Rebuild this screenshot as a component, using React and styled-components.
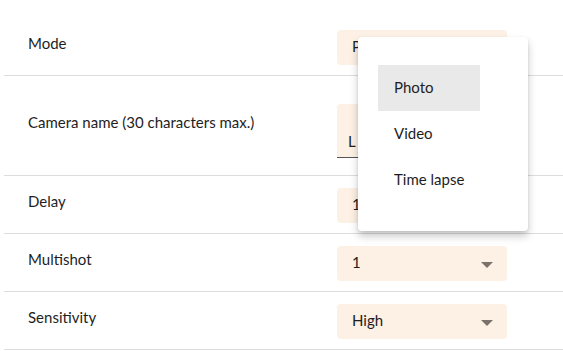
import React from "react";
import styled, { createGlobalStyle } from "styled-components";

const GlobalStyle = createGlobalStyle`
    body {
        margin: 0;
        background: #ffffff;
        font-family: Lato, "Open Sans", sans-serif;
        color: #1e1e1e;
    }
`

const StyledPage = styled.div`
    width: 559px;
    padding: 18px 0 0 4px;
`

const StyledRow = styled.div`
    display: grid;
    grid-template-columns: 309px 170px;
    align-items: center;
    padding: 12px 0 10px 24px;
    border-bottom: 1px solid #dddddd;
`

const StyledLabel = styled.div`
    font-size: 15px;
    line-height: 22px;
    padding-bottom: 10px;
`

const StyledSelect = styled.div`
    position: relative;
    height: 35px;
    border-radius: 4px;
    background-color: #fdf0e4;
    display: flex;
    align-items: center;
    justify-content: space-between;
    padding: 0 14px 0 15px;
    font-size: 15px;
`

const StyledValue = styled.span`
    padding-bottom: 4px;
`

const StyledArrow = styled.span`
    width: 0;
    height: 0;
    margin-top: 3px;
    border-left: 6px solid transparent;
    border-right: 6px solid transparent;
    border-top: 6px solid #7b736b;
`

const StyledInput = styled.div`
    height: 54px;
    margin: 16px 0 7px;
    border-radius: 4px 4px 0 0;
    background-color: #fdf0e4;
    border-bottom: 1px solid #555555;
    display: flex;
    align-items: flex-end;
    padding: 0 0 5px 11px;
    box-sizing: border-box;
    font-size: 15px;
    line-height: 22px;
`

const StyledMenu = styled.div`
    position: absolute;
    top: 7px;
    left: 21px;
    width: 170px;
    height: 194px;
    box-sizing: border-box;
    padding: 28px 20px;
    background: #ffffff;
    border-radius: 4px;
    box-shadow: 0 5px 9px rgba(0, 0, 0, 0.22), 0 1px 3px rgba(0, 0, 0, 0.08);
    z-index: 2;
`

const StyledList = styled.div`
    display: flex;
    flex-direction: column;
    width: fit-content;
`

const StyledItem = styled.div`
    height: 46px;
    box-sizing: border-box;
    display: flex;
    align-items: center;
    padding: 0 16px 3px;
    font-size: 15px;
    background-color: ${props => (props.selected ? "#e9e9e9" : "transparent")};
`

const modes = ["Photo", "Video", "Time lapse"]

function Select({ value, children }) {
    return (
        <StyledSelect>
            <StyledValue>{value}</StyledValue>
            <StyledArrow />
            {children}
        </StyledSelect>
    )
}

function App() {
    return (
        <StyledPage>
            <GlobalStyle />
            <StyledRow>
                <StyledLabel>Mode</StyledLabel>
                <Select value="Photo">
                    <StyledMenu>
                        <StyledList>
                            {modes.map(m => (
                                <StyledItem key={m} selected={m === "Photo"}>{m}</StyledItem>
                            ))}
                        </StyledList>
                    </StyledMenu>
                </Select>
            </StyledRow>
            <StyledRow>
                <StyledLabel>Camera name (30 characters max.)</StyledLabel>
                <StyledInput>L</StyledInput>
            </StyledRow>
            <StyledRow>
                <StyledLabel>Delay</StyledLabel>
                <Select value="1" />
            </StyledRow>
            <StyledRow>
                <StyledLabel>Multishot</StyledLabel>
                <Select value="1" />
            </StyledRow>
            <StyledRow>
                <StyledLabel>Sensitivity</StyledLabel>
                <Select value="High" />
            </StyledRow>
        </StyledPage>
    )
}

export default App
